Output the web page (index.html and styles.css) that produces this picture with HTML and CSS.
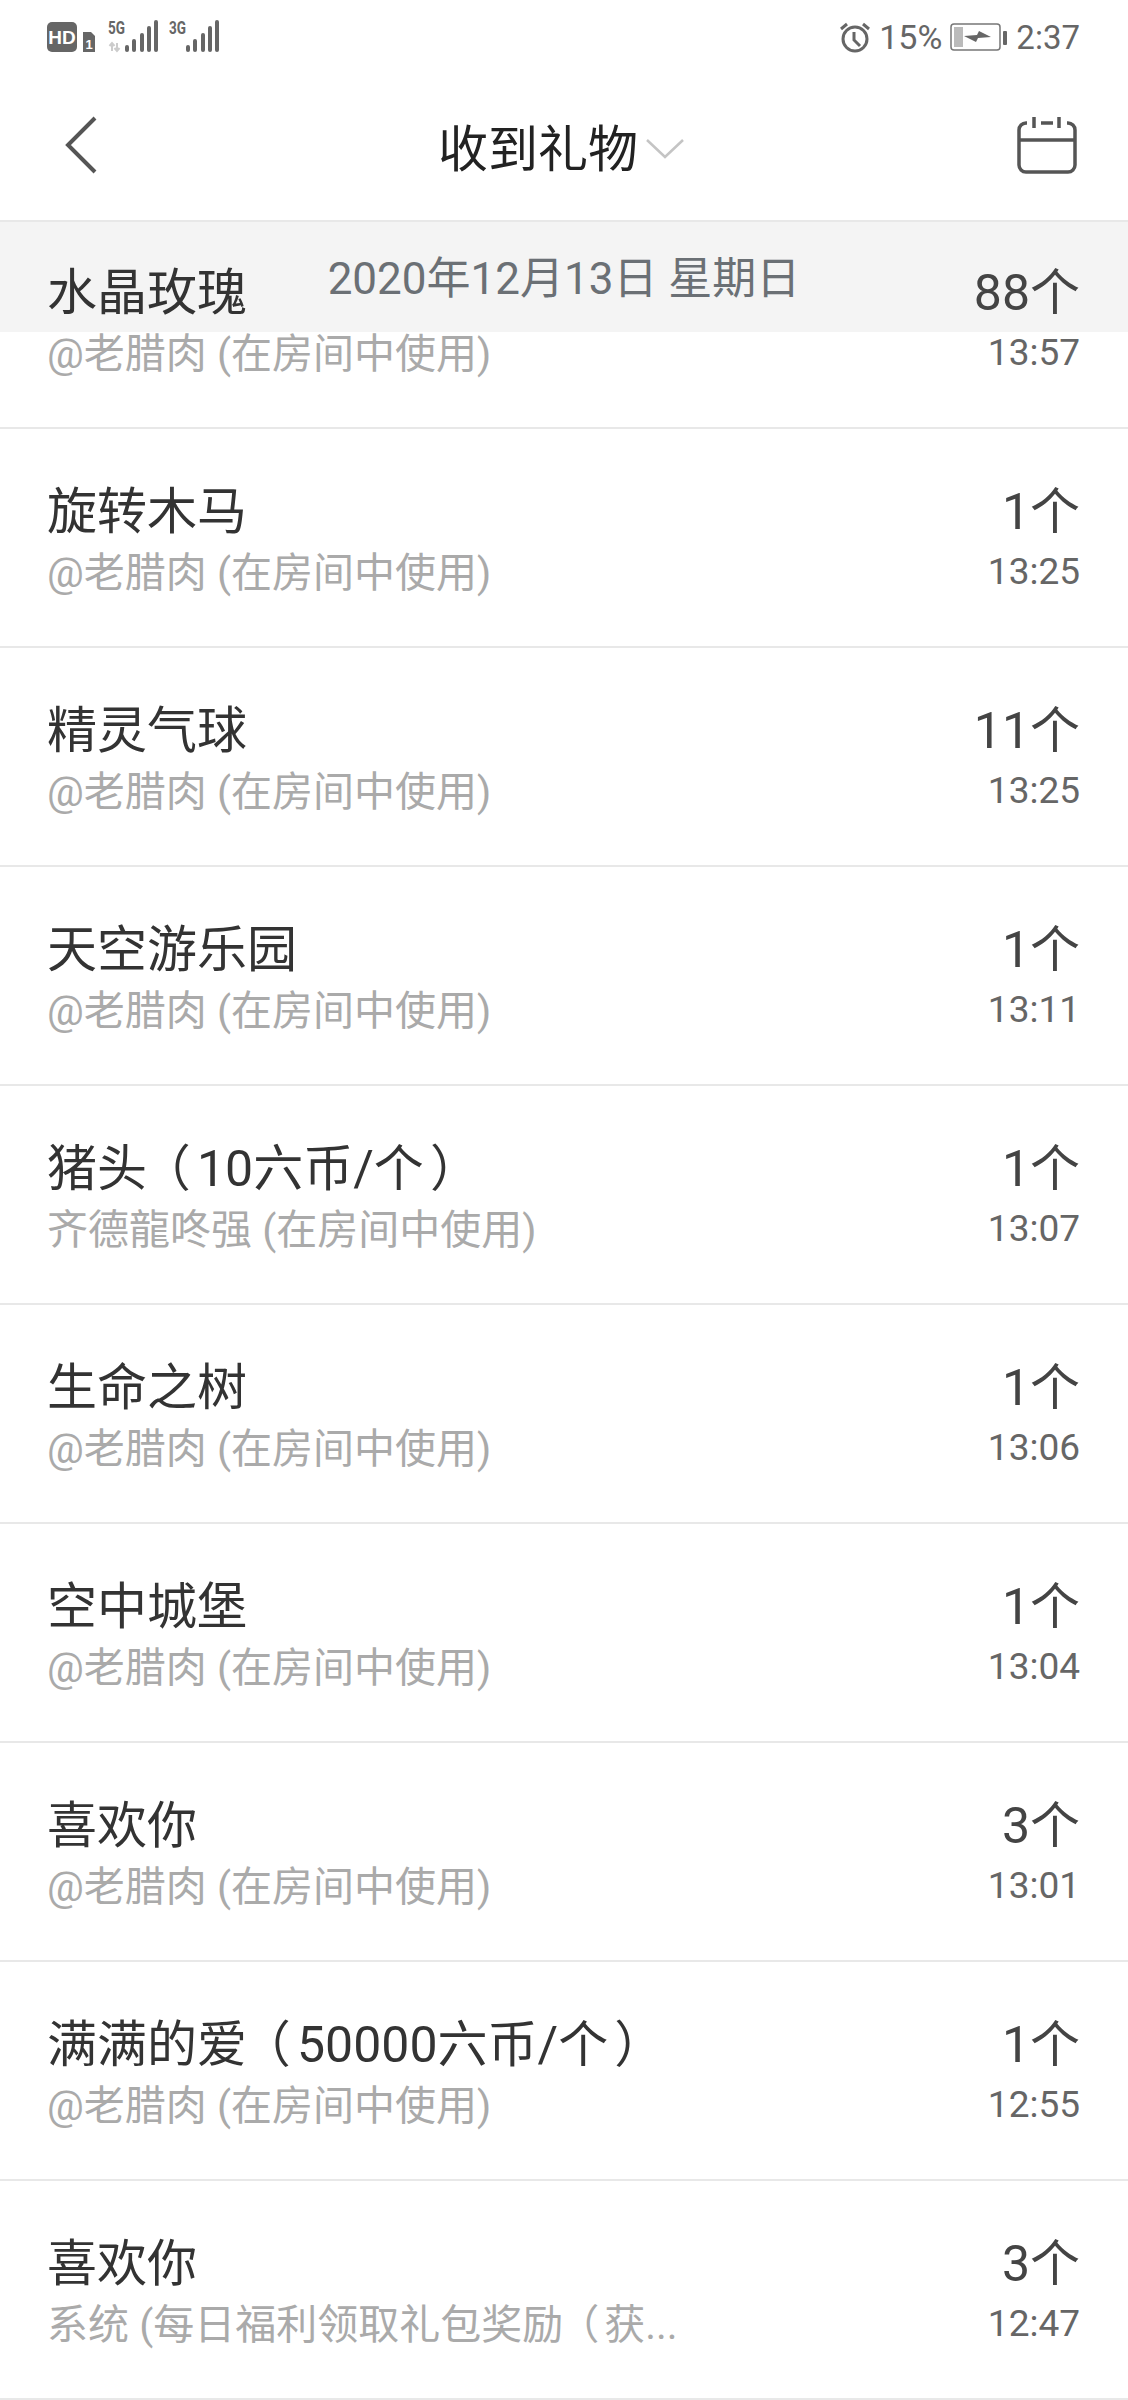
FILE: index.html
```html
<!DOCTYPE html>
<html lang="zh-CN">
<head>
    <meta charset="UTF-8">
    <meta name="viewport" content="width=device-width, initial-scale=1.0">
    <title>收到礼物</title>
    <link rel="stylesheet" href="styles.css">
</head>
<body>
    <div class="status-bar">
        <div class="status-left">
            <svg class="hd-icon" width="50" height="32" viewBox="0 0 50 32">
                <rect x="0" y="1" width="30" height="30" rx="5" fill="#666"/>
                <text x="15" y="23" class="hd-text" text-anchor="middle">HD</text>
                <path d="M36 11h8l4 4v16h-12z" fill="#666"/>
                <text x="42" y="28" class="sim-text" text-anchor="middle">1</text>
            </svg>
            <svg class="signal-icon" width="54" height="44" viewBox="0 -4 54 44">
                <text x="0" y="15" class="net-text" textLength="17" lengthAdjust="spacingAndGlyphs">5G</text>
                <path d="M4 32v-8M1.5 27L4 24l2.5 3M9 24v8M6.5 29L9 32l2.5-3" stroke="#ccc" stroke-width="2" fill="none"/>
                <rect x="17" y="26" width="4" height="7" rx="2" fill="#666"/>
                <rect x="24" y="20" width="4" height="13" rx="2" fill="#666"/>
                <rect x="32" y="14" width="4" height="19" rx="2" fill="#666"/>
                <rect x="39" y="7" width="4" height="26" rx="2" fill="#666"/>
                <rect x="46" y="1" width="4" height="32" rx="2" fill="#666"/>
            </svg>
            <svg class="signal-icon" width="54" height="44" viewBox="0 -4 54 44">
                <text x="0" y="15" class="net-text" textLength="17" lengthAdjust="spacingAndGlyphs">3G</text>
                <rect x="17" y="26" width="4" height="7" rx="2" fill="#666"/>
                <rect x="24" y="20" width="4" height="13" rx="2" fill="#666"/>
                <rect x="32" y="14" width="4" height="19" rx="2" fill="#666"/>
                <rect x="39" y="7" width="4" height="26" rx="2" fill="#666"/>
                <rect x="46" y="1" width="4" height="32" rx="2" fill="#666"/>
            </svg>
        </div>
        <div class="status-right">
            <svg width="32" height="32" viewBox="0 0 32 32" fill="none" stroke="#666">
                <circle cx="16" cy="18" r="12" stroke-width="3"/>
                <path d="M15 11v8l6 6" stroke-width="3"/>
                <path d="M2 8l6-5M30 8l-6-5" stroke-width="3"/>
            </svg>
            <span class="status-text status-pct">15%</span>
            <svg class="battery" width="58" height="28" viewBox="0 0 58 28" fill="none">
                <rect x="1" y="1" width="49" height="26" rx="3" stroke="#777" stroke-width="1.5"/>
                <rect x="4" y="4" width="9" height="20" fill="#bbb"/>
                <path d="M14 13l13-1 2-4 12 6-13 1-2 4z" fill="#666"/>
                <rect x="53" y="8" width="4" height="14" rx="1" fill="#666"/>
            </svg>
            <span class="status-text">2:37</span>
        </div>
    </div>

    <header class="nav-bar">
        <svg class="back-icon" width="32" height="58" viewBox="0 0 32 58" fill="none">
            <path d="M30 2L3 29l27 27" stroke="#555" stroke-width="4"/>
        </svg>
        <div class="nav-title">
            <h1>收到礼物</h1>
            <svg class="nav-arrow" width="38" height="20" viewBox="0 0 38 20" fill="none">
                <path d="M1 1l18 17L37 1" stroke="#c4c4c4" stroke-width="2.5"/>
            </svg>
        </div>
        <svg class="calendar-icon" width="60" height="58" viewBox="0 0 60 58" fill="none" stroke="#555" stroke-width="3.5">
            <path d="M10 6H9a7 7 0 0 0-7 7v35a7 7 0 0 0 7 7h42a7 7 0 0 0 7-7V13a7 7 0 0 0-7-7h-1"/>
            <path d="M2 23h56M17 0v11M42 0v11M24 6h12"/>
        </svg>
    </header>

    <main class="gift-page">
        <div class="date-band">2020年12月13日 星期日</div>
        <ul class="gift-list">
            <li class="gift-row">
                <div class="gift-info"><div class="gift-name">水晶玫瑰</div><div class="gift-from">@老腊肉 (在房间中使用)</div></div>
                <div class="gift-meta"><div class="gift-count">88个</div><div class="gift-time">13:57</div></div>
            </li>
            <li class="gift-row">
                <div class="gift-info"><div class="gift-name">旋转木马</div><div class="gift-from">@老腊肉 (在房间中使用)</div></div>
                <div class="gift-meta"><div class="gift-count">1个</div><div class="gift-time">13:25</div></div>
            </li>
            <li class="gift-row">
                <div class="gift-info"><div class="gift-name">精灵气球</div><div class="gift-from">@老腊肉 (在房间中使用)</div></div>
                <div class="gift-meta"><div class="gift-count">11个</div><div class="gift-time">13:25</div></div>
            </li>
            <li class="gift-row">
                <div class="gift-info"><div class="gift-name">天空游乐园</div><div class="gift-from">@老腊肉 (在房间中使用)</div></div>
                <div class="gift-meta"><div class="gift-count">1个</div><div class="gift-time">13:11</div></div>
            </li>
            <li class="gift-row">
                <div class="gift-info"><div class="gift-name">猪头<span class="paren-open">（</span>10六币/个<span class="paren-close">）</span></div><div class="gift-from">齐德龍咚强 (在房间中使用)</div></div>
                <div class="gift-meta"><div class="gift-count">1个</div><div class="gift-time">13:07</div></div>
            </li>
            <li class="gift-row">
                <div class="gift-info"><div class="gift-name">生命之树</div><div class="gift-from">@老腊肉 (在房间中使用)</div></div>
                <div class="gift-meta"><div class="gift-count">1个</div><div class="gift-time">13:06</div></div>
            </li>
            <li class="gift-row">
                <div class="gift-info"><div class="gift-name">空中城堡</div><div class="gift-from">@老腊肉 (在房间中使用)</div></div>
                <div class="gift-meta"><div class="gift-count">1个</div><div class="gift-time">13:04</div></div>
            </li>
            <li class="gift-row">
                <div class="gift-info"><div class="gift-name">喜欢你</div><div class="gift-from">@老腊肉 (在房间中使用)</div></div>
                <div class="gift-meta"><div class="gift-count">3个</div><div class="gift-time">13:01</div></div>
            </li>
            <li class="gift-row">
                <div class="gift-info"><div class="gift-name">满满的爱<span class="paren-open">（</span>50000六币/个<span class="paren-close">）</span></div><div class="gift-from">@老腊肉 (在房间中使用)</div></div>
                <div class="gift-meta"><div class="gift-count">1个</div><div class="gift-time">12:55</div></div>
            </li>
            <li class="gift-row">
                <div class="gift-info"><div class="gift-name">喜欢你</div><div class="gift-from">系统 (每日福利领取礼包奖励<span class="paren-open">（</span>获...</div></div>
                <div class="gift-meta"><div class="gift-count">3个</div><div class="gift-time">12:47</div></div>
            </li>
        </ul>
    </main>
</body>
</html>
```

FILE: styles.css
```css
* {
    box-sizing: border-box;
}

body {
    font-family: Roboto, "Noto Sans CJK SC", sans-serif;
    margin: 0;
    padding: 0;
    background-color: #fff;
    height: 2400px;
    overflow: hidden;
}

.status-bar {
    height: 70px;
    display: flex;
    justify-content: space-between;
    align-items: center;
    padding: 4px 48px 0 47px;
}

.status-left {
    display: flex;
    align-items: center;
    gap: 7px;
}

.hd-icon {
    margin-right: 4px;
}

.status-right {
    display: flex;
    align-items: center;
    gap: 8px;
}

.status-text {
    font-size: 33px;
    color: #666;
}

.status-pct {
    font-size: 34px;
}

.hd-text {
    font-family: "Liberation Sans", sans-serif;
    font-size: 19px;
    font-weight: bold;
    fill: #fff;
}

.sim-text {
    font-family: "Liberation Sans", sans-serif;
    font-size: 13px;
    font-weight: bold;
    fill: #fff;
}

.net-text {
    font-family: Roboto, sans-serif;
    font-size: 19px;
    font-weight: bold;
    fill: #666;
}

.nav-bar {
    height: 152px;
    display: flex;
    justify-content: space-between;
    align-items: center;
    padding: 0 51px 0 65px;
    border-bottom: 2px solid #e8e8e8;
}

.nav-title {
    display: flex;
    align-items: center;
    gap: 8px;
    margin-left: 8px;
}

.nav-title h1 {
    margin: 0;
    font-size: 50px;
    font-weight: normal;
    color: #222;
}

.nav-arrow {
    margin-top: 8px;
}

.calendar-icon {
    margin-top: 2px;
}

.gift-page {
    position: relative;
    display: flow-root;
}

.date-band {
    position: absolute;
    top: 0;
    left: 0;
    right: 0;
    height: 110px;
    background-color: #f4f4f4;
    color: #6b7075;
    font-size: 44px;
    line-height: 115px;
    text-align: center;
}

.gift-list {
    list-style: none;
    margin: -12px 0 0;
    padding: 0;
    position: relative;
}

.gift-row {
    height: 219px;
    border-bottom: 2px solid #e8e8e8;
    display: flex;
    justify-content: space-between;
    padding: 52px 48px 0 47px;
}

.gift-name {
    font-size: 50px;
    line-height: 62px;
    color: #333;
}

.gift-from {
    font-size: 41px;
    line-height: 60px;
    color: #aaa;
}

/* fullwidth brackets sit nearer the middle of their box in the reference */
.paren-open,
.paren-close {
    display: inline-block;
    width: 1em;
    font-feature-settings: "palt";
}

.paren-open {
    text-align: right;
    padding-right: 0.16em;
}

.paren-close {
    text-align: left;
    padding-left: 0.16em;
}

.gift-meta {
    text-align: right;
}

.gift-count {
    font-size: 50px;
    line-height: 62px;
    color: #444;
}

.gift-time {
    font-size: 37px;
    line-height: 58px;
    color: #666;
}
```
